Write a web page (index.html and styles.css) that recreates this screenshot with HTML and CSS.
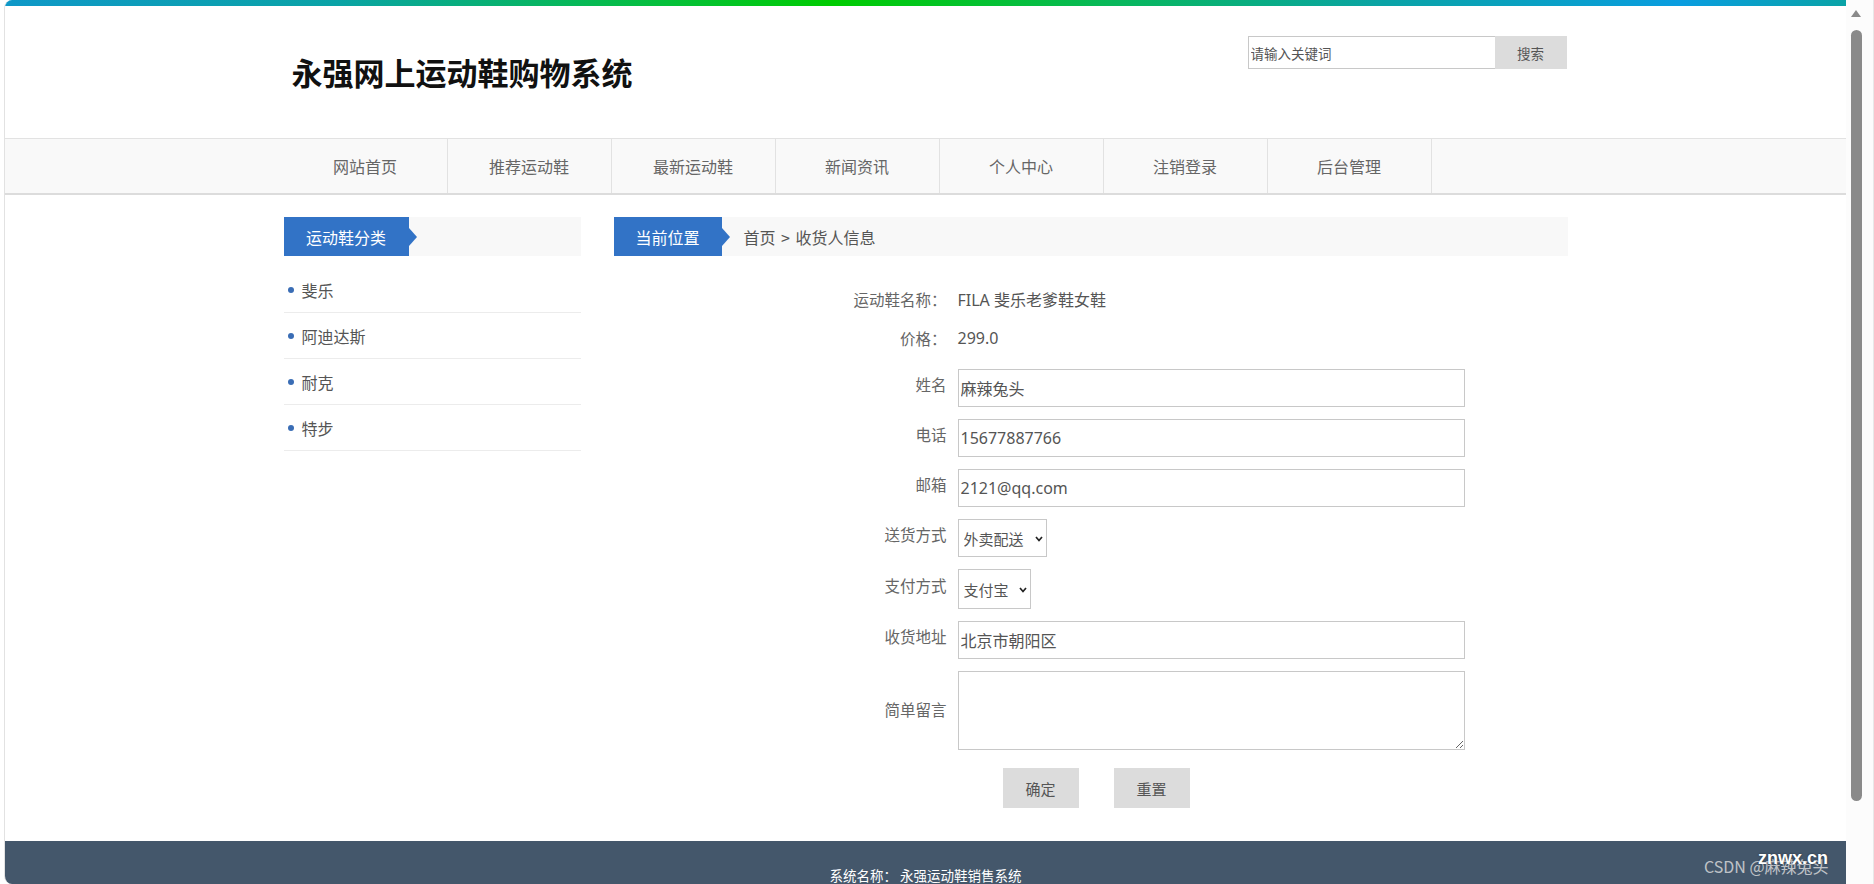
FILE: index.html
```html
<!DOCTYPE html>
<html lang="zh-CN">
<head>
<meta charset="utf-8">
<title>永强网上运动鞋购物系统</title>
<link rel="stylesheet" href="styles.css">
</head>
<body>
<div class="window">
  <div class="frame">
    <div class="topline"></div>
    <header class="header">
      <div class="container header-inner">
        <h1 class="logo">永强网上运动鞋购物系统</h1>
        <form class="search">
          <input class="search-input" type="text" placeholder="请输入关键词">
          <button class="search-btn" type="button">搜索</button>
        </form>
      </div>
    </header>
    <nav class="nav">
      <ul class="container nav-list">
        <li class="nav-item">网站首页</li>
        <li class="nav-item">推荐运动鞋</li>
        <li class="nav-item">最新运动鞋</li>
        <li class="nav-item">新闻资讯</li>
        <li class="nav-item">个人中心</li>
        <li class="nav-item">注销登录</li>
        <li class="nav-item">后台管理</li>
      </ul>
    </nav>
    <div class="container main">
      <aside class="sidebar">
        <div class="bar"><span class="bar-tag tag-cat">运动鞋分类</span></div>
        <ul class="cat-list">
          <li class="cat-item">斐乐</li>
          <li class="cat-item">阿迪达斯</li>
          <li class="cat-item">耐克</li>
          <li class="cat-item">特步</li>
        </ul>
      </aside>
      <section class="content">
        <div class="bar"><span class="bar-tag tag-pos">当前位置</span><span class="crumb">首页 &gt; 收货人信息</span></div>
        <form class="order-form">
          <div class="row info"><span class="row-label">运动鞋名称：</span><span class="value">FILA 斐乐老爹鞋女鞋</span></div>
          <div class="row info last-info"><span class="row-label">价格：</span><span class="value">299.0</span></div>
          <div class="row"><label class="row-label shift">姓名</label><input class="field" type="text" value="麻辣兔头"></div>
          <div class="row"><label class="row-label shift">电话</label><input class="field" type="text" value="15677887766"></div>
          <div class="row"><label class="row-label shift">邮箱</label><input class="field" type="text" value="2121@qq.com"></div>
          <div class="row"><label class="row-label shift">送货方式</label>
            <span class="select-wrap">
              <select class="select sel-ship"><option>外卖配送</option></select>
              <svg class="chev" width="8" height="6" viewBox="0 0 8 6"><path d="M1 1 L4 4.5 L7 1" fill="none" stroke="#222" stroke-width="1.7"/></svg>
            </span>
          </div>
          <div class="row"><label class="row-label shift">支付方式</label>
            <span class="select-wrap">
              <select class="select sel-pay"><option>支付宝</option></select>
              <svg class="chev" width="8" height="6" viewBox="0 0 8 6"><path d="M1 1 L4 4.5 L7 1" fill="none" stroke="#222" stroke-width="1.7"/></svg>
            </span>
          </div>
          <div class="row"><label class="row-label shift">收货地址</label><input class="field" type="text" value="北京市朝阳区"></div>
          <div class="row"><label class="row-label shift-small">简单留言</label><textarea class="field area"></textarea></div>
          <div class="row buttons"><span class="row-label"></span><button class="btn btn-ok" type="button">确定</button><button class="btn" type="reset">重置</button></div>
        </form>
      </section>
    </div>
    <footer class="footer">系统名称： 永强运动鞋销售系统</footer>
  </div>
  <div class="scrollbar">
    <svg class="sb-arrow" width="10" height="7" viewBox="0 0 10 7"><path d="M5 0 L10 7 L0 7 Z" fill="#8a8a8a"/></svg>
    <div class="sb-thumb"></div>
  </div>
</div>
<div class="watermark"><span class="wm-csdn">CSDN @麻辣兔头</span><span class="wm-site">znwx.cn</span></div>
</body>
</html>
```
FILE: styles.css
```css
* { box-sizing: border-box; }
html, body { margin: 0; padding: 0; }
body {
  width: 1874px;
  height: 884px;
  overflow: hidden;
  background: #fff;
  font-family: "Noto Sans", "Noto Sans CJK SC", sans-serif;
  color: #555;
  position: relative;
}
ul { list-style: none; margin: 0; padding: 0; }

.window { display: flex; height: 884px; }
.frame {
  width: 1842px;
  height: 884px;
  margin-left: 4px;
  border-left: 1px solid #e2e2e2;
  border-radius: 8px 0 0 8px;
  overflow: hidden;
  display: flex;
  flex-direction: column;
  background: #fff;
}
.topline {
  height: 6px;
  flex: none;
  background: linear-gradient(to right, #0f98c8 0%, #0aa3a6 18%, #05c03a 36%, #00cc00 45%, #08b85a 60%, #0aa3a6 75%, #0a9de0 91%, #0aa3a6 100%);
}
.container { width: 1284px; margin: 0 auto; }

.header { height: 132px; flex: none; }
.header-inner { display: flex; justify-content: space-between; align-items: flex-start; }
.logo {
  margin: 46px 0 0 8px;
  font-size: 31px;
  line-height: 40px;
  font-weight: 700;
  color: #111;
  font-family: "Noto Sans CJK SC", sans-serif;
}
.search { display: flex; margin: 30px 1px 0 0; }
.search-input {
  width: 247px; height: 33px;
  border: 1px solid #c8c8c8; border-right: none;
  padding: 0 2px; font-size: 13.5px; color: #555;
  font-family: "Noto Sans CJK SC", sans-serif;
  outline: none;
}
.search-input::placeholder { color: #555; }
.search-btn {
  width: 72px; height: 33px; border: none; background: #dcdcdc;
  font-size: 13.5px; color: #555; font-family: "Noto Sans CJK SC", sans-serif;
}

.nav {
  flex: none;
  background: #f9f9f9;
  border-top: 1px solid #e2e2e2;
  border-bottom: 2px solid #dcdcdc;
}
.nav-list { display: flex; height: 54px; }
.nav-item {
  width: 164px;
  border-right: 1px solid #e2e2e2;
  display: flex; align-items: center; justify-content: center;
  font-size: 16px; color: #666;
  font-family: "Noto Sans CJK SC", sans-serif;
}

.main { display: flex; gap: 33px; margin-top: 22px; flex: none; }
.sidebar { width: 297px; flex: none; }
.content { flex: 1; }
.bar {
  height: 39px;
  background: #f8f8f8;
  display: flex; align-items: center;
}
.bar-tag {
  position: relative;
  height: 39px;
  display: flex; align-items: center; justify-content: center;
  background: #3273c6;
  color: #fff;
  font-size: 16px;
  font-family: "Noto Sans CJK SC", sans-serif;
}
.bar-tag::after {
  content: "";
  position: absolute;
  right: -8px; top: 50%;
  margin-top: -9px;
  border-left: 8px solid #3273c6;
  border-top: 9px solid transparent;
  border-bottom: 9px solid transparent;
}
.tag-cat { width: 125px; }
.tag-pos { width: 108px; }
.crumb { margin-left: 22px; font-size: 16px; color: #555; font-family: "Noto Sans CJK SC", sans-serif; word-spacing: 2px; }

.cat-list { margin-top: 11px; }
.cat-item {
  height: 46px;
  border-bottom: 1px solid #ececec;
  display: flex; align-items: center;
  padding-left: 4px;
  font-size: 16px; color: #555;
  font-family: "Noto Sans CJK SC", sans-serif;
}
.cat-item::before {
  content: "";
  width: 6px; height: 6px; border-radius: 50%;
  background: #3a6db5;
  margin-right: 8px;
}

.order-form { padding-top: 29px; display: flex; flex-direction: column; gap: 12px; }
.row { display: flex; align-items: center; }
.row-label {
  width: 344px; flex: none;
  text-align: right;
  padding-right: 11px;
  font-size: 15.5px; line-height: 20px; color: #666;
  font-family: "Noto Sans CJK SC", sans-serif;
}
.info { height: 27px; }
.last-info { margin-bottom: 6px; }
.value { font-size: 16px; color: #555; }
.shift { padding-bottom: 9px; }
.shift-small { padding-bottom: 4px; }
.field {
  width: 507px; height: 38px;
  border: 1px solid #c8c8c8;
  padding: 0 2px;
  font-size: 16px; color: #555;
  font-family: "Noto Sans", "Noto Sans CJK SC", sans-serif;
  background: #fff;
  outline: none;
}
.area { height: 79px; resize: vertical; }
.select-wrap { position: relative; display: inline-block; }
.select {
  -webkit-appearance: none; appearance: none;
  height: 38px;
  border: 1px solid #c8c8c8;
  background: #fff;
  padding: 0 0 0 5px;
  font-size: 15px; color: #555;
  font-family: "Noto Sans CJK SC", sans-serif;
  border-radius: 0;
}
.sel-ship { width: 89px; }
.sel-pay { width: 73px; height: 40px; }
.chev { position: absolute; right: 4px; top: 50%; margin-top: -2px; }
.buttons { margin-top: 6px; }
.buttons .row-label { width: 389px; }
.btn {
  width: 76px; height: 40px;
  border: none; background: #dcdcdc;
  font-size: 15px; color: #555;
  font-family: "Noto Sans CJK SC", sans-serif;
  margin-right: 35px;
}

.footer {
  margin-top: 33px;
  height: 60px;
  flex: none;
  background: #44576b;
  color: #fff;
  text-align: center;
  padding-top: 25px;
  font-size: 13.5px; line-height: 18px;
  font-family: "Noto Sans CJK SC", sans-serif;
}

.scrollbar {
  width: 28px; height: 884px;
  background: #fcfcfc;
  display: flex; flex-direction: column; align-items: flex-start;
  padding-left: 5px;
  border-right: 1px solid #e8e8e8;
}
.sb-arrow { margin: 10px 0 0 0; }
.sb-thumb {
  width: 11px; height: 771px;
  margin-top: 13px;
  background: #8a8a8a;
  border-radius: 6px;
}

.watermark {
  position: absolute;
  left: 1704px; top: 850px;
  width: 170px; height: 30px;
  font-family: "Noto Sans CJK SC", sans-serif;
}
.wm-csdn {
  position: absolute; left: 0; top: 4px;
  font-size: 16px; color: rgba(225,225,225,0.8);
  white-space: nowrap;
}
.wm-site {
  position: absolute; left: 54px; top: -2px;
  font-size: 18px; font-weight: 700; color: #fff;
  font-family: "Liberation Sans", sans-serif;
  text-shadow: 0 0 2px rgba(0,0,0,0.5);
}
```
